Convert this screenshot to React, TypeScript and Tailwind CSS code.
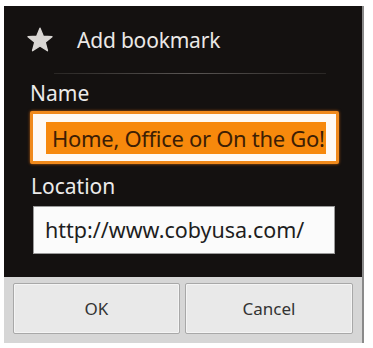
import React from "react";

export default function App() {
  const font = { fontFamily: '"Noto Sans", "Open Sans", sans-serif' };
  return (
    <div className="w-[373px] h-[348px] bg-white pt-[6px] pl-[4px]" style={font}>
      <div className="w-[360px] border-r-[2px] border-[#8a8a8a]">
        <div className="bg-[#141110] h-[271px] flex flex-col">
          <div className="flex items-center h-[58px] pt-[10px]">
            <svg width="28" height="26" viewBox="0 0 24 23" className="ml-[22px]">
              <path
                d="M12 1 L14.9 8.2 L22.6 8.6 L16.6 13.5 L18.6 21 L12 16.8 L5.4 21 L7.4 13.5 L1.4 8.6 L9.1 8.2 Z"
                fill="#d9d6d3"
                stroke="#d9d6d3"
                strokeWidth="1.2"
                strokeLinejoin="round"
              />
            </svg>
            <span className="ml-[23px] text-[21px] leading-none text-[#ebe8e6] tracking-[-0.2px]">Add bookmark</span>
          </div>
          <div className="mt-[9px] ml-[50px] w-[272px] h-[1px] bg-gradient-to-r from-[#2a2725] via-[#5a5654] to-[#2a2725]" />
          <div className="ml-[26px] mt-[7px] text-[21px] leading-[24px] text-[#ecebea]">Name</div>
          <div className="ml-[26px] mt-[6px] w-[309px] h-[53px] rounded-[2px] bg-[#f08a1c] p-[3px] shadow-[0_0_3px_#c06010]">
            <div className="w-full h-full bg-[#fffaf4] flex items-center pl-[13px]">
              <span className="bg-[#f7890c] text-[#3d1e04] text-[22px] leading-[32px] pl-[6px] pr-[1px] tracking-[-0.3px] whitespace-nowrap">
                Home, Office or On the Go!
              </span>
            </div>
          </div>
          <div className="ml-[27px] mt-[10px] text-[21px] leading-[24px] text-[#ecebea]">Location</div>
          <div className="ml-[29px] mt-[8px] w-[302px] h-[48px] bg-[#fbfbfb] border border-[#9a9a9a] flex items-center pl-[11px]">
            <span className="text-[21.5px] text-[#1e1e1e] leading-none whitespace-nowrap">http://www.cobyusa.com/</span>
          </div>
        </div>
        <div className="bg-[#d6d6d6] h-[66px] flex items-start pt-[6px] pl-[9px] gap-[5px]">
          <button className="w-[167px] h-[51px] bg-[#e9e9e9] border border-[#a8a8a8] rounded-[2px] text-[17px] text-[#333] shadow-[inset_0_0_0_1px_#f4f4f4]">
            OK
          </button>
          <button className="w-[168px] h-[51px] bg-[#e9e9e9] border border-[#a8a8a8] rounded-[2px] text-[17px] text-[#333] shadow-[inset_0_0_0_1px_#f4f4f4]">
            Cancel
          </button>
        </div>
      </div>
    </div>
  );
}
